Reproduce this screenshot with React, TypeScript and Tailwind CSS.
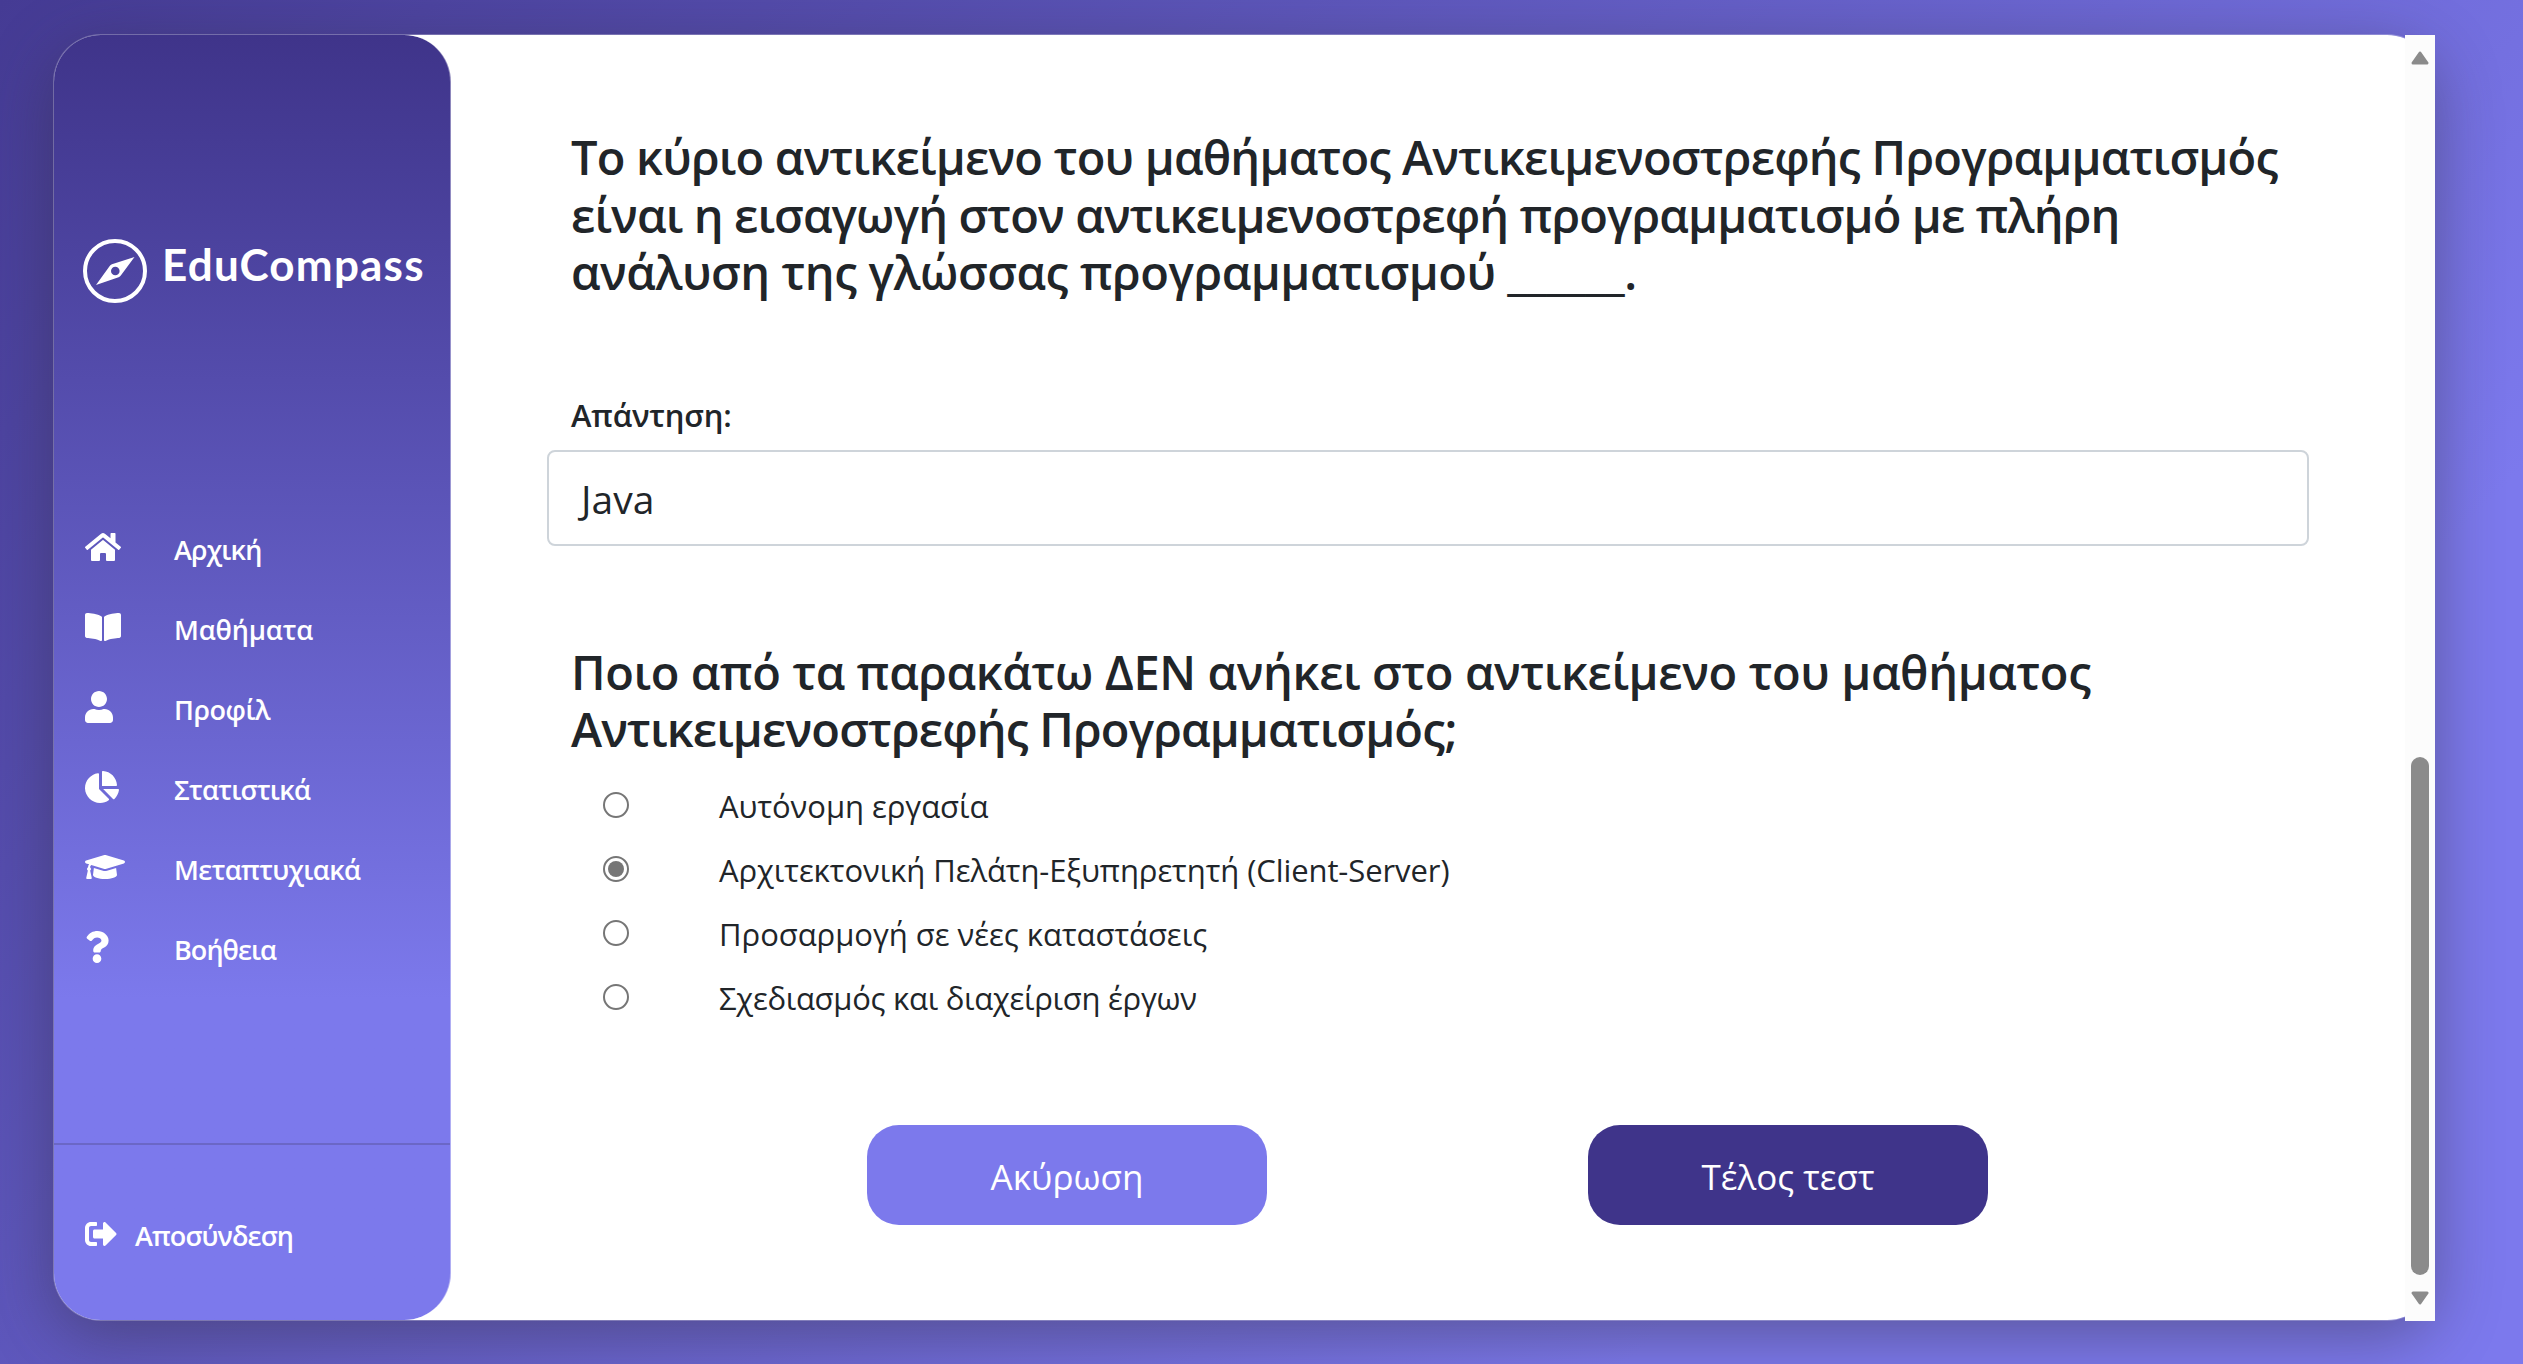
import type { ReactNode } from "react";
import {
  FaBookOpen,
  FaChartPie,
  FaGraduationCap,
  FaHome,
  FaQuestion,
  FaSignOutAlt,
  FaUser,
} from "react-icons/fa";

const menu: { label: string; icon: ReactNode; tracking: string }[] = [
  { label: "Αρχική", icon: <FaHome className="h-8 w-9" />, tracking: "tracking-[-0.8px]" },
  { label: "Μαθήματα", icon: <FaBookOpen className="h-8 w-9" />, tracking: "tracking-[-0.15px]" },
  { label: "Προφίλ", icon: <FaUser className="h-8 w-7" />, tracking: "tracking-[-0.45px]" },
  { label: "Στατιστικά", icon: <FaChartPie className="h-8 w-[34px]" />, tracking: "tracking-[-0.7px]" },
  { label: "Μεταπτυχιακά", icon: <FaGraduationCap className="h-8 w-10" />, tracking: "tracking-[-0.6px]" },
  { label: "Βοήθεια", icon: <FaQuestion className="h-8 w-6" />, tracking: "tracking-[-0.95px]" },
];

const options = [
  { label: "Αυτόνομη εργασία", tracking: "tracking-[-0.05px]" },
  {
    label: "Αρχιτεκτονική Πελάτη-Εξυπηρετητή (Client-Server)",
    tracking: "tracking-[-0.08px]",
    checked: true,
  },
  { label: "Προσαρμογή σε νέες καταστάσεις", tracking: "tracking-[-0.03px]" },
  { label: "Σχεδιασμός και διαχείριση έργων", tracking: "tracking-[-0.28px]" },
];

function Logo() {
  return (
    <div className="mt-[204px] ml-[29px] flex h-16 items-center">
      <svg width="64" height="64" viewBox="0 0 64 64" fill="none">
        <circle cx="32" cy="32" r="30" stroke="#fff" strokeWidth="4" />
        <path
          fillRule="evenodd"
          fill="#fff"
          d="M51.500 18 37.800 36.500q-.8 1.200-2.200 1.700L13 46l13.700-19q.8-1.200 2.200-1.700zM32.300 27.700a4.300 4.300 0 1 0 0 8.600 4.300 4.300 0 0 0 0-8.600z"
        />
      </svg>
      <span className="-mt-3.5 ml-[15px] font-[Lato] text-[44px] leading-none font-bold tracking-[1.2px] whitespace-nowrap">
        EduCompass
      </span>
    </div>
  );
}

function Sidebar() {
  return (
    <aside className="flex w-[397px] shrink-0 flex-col overflow-hidden rounded-[47px] border-r border-white/40 bg-linear-to-b from-[#3f348a] to-[#7c79ec] to-75% bg-origin-border text-white">
      <Logo />
      <nav className="mt-[204px] flex flex-col">
        {menu.map((m) => (
          <a key={m.label} className="flex h-20 items-center pl-[31px]">
            <span className="w-[89px]">{m.icon}</span>
            <span className={`pt-1 text-[27px] leading-none font-semibold ${m.tracking}`}>{m.label}</span>
          </a>
        ))}
      </nav>
      <div className="mt-auto h-[177px] border-t-2 border-[#6b67c6]">
        <a className="mt-[57px] flex h-16 items-center pl-[31px]">
          <span className="w-[50px]">
            <FaSignOutAlt className="size-8" />
          </span>
          <span className="pt-[3px] text-[27px] leading-none font-semibold tracking-[-0.9px]">Αποσύνδεση</span>
        </a>
      </div>
    </aside>
  );
}

function Radio({ checked }: { checked?: boolean }) {
  return (
    <span className="flex size-[26px] items-center justify-center rounded-full border-2 border-[#767676]">
      {checked && <span className="size-4 rounded-full bg-[#767676]" />}
    </span>
  );
}

function Scrollbar() {
  return (
    <div className="-mr-px -mb-px flex w-[30px] shrink-0 flex-col items-center bg-[#fcfcfc]">
      <svg className="mt-4" width="18" height="14" viewBox="0 0 18 14">
        <path d="M9 2 16 12H2z" fill="#8b8b8b" stroke="#8b8b8b" strokeWidth="3" strokeLinejoin="round" />
      </svg>
      <div className="mt-[692px] h-[518px] w-[18px] rounded-full bg-[#8b8b8b]" />
      <svg className="mt-4" width="18" height="14" viewBox="0 0 18 14">
        <path d="M9 12 16 2H2z" fill="#8b8b8b" stroke="#8b8b8b" strokeWidth="3" strokeLinejoin="round" />
      </svg>
    </div>
  );
}

function Question({ children }: { children: ReactNode }) {
  return (
    <h2 className="pl-6 text-[47px] leading-[57.6px] font-semibold whitespace-nowrap">{children}</h2>
  );
}

export default function App() {
  return (
    <div className="h-[1364px] w-[2523px] overflow-hidden bg-[linear-gradient(135deg,#453b94_0%,#7c79ed_77%)] px-[53px] pt-[34px] font-['Open_Sans',sans-serif]">
      <div className="flex h-[1287px] w-[2382px] rounded-[48px] border border-white/25 bg-white bg-clip-padding shadow-[0_16px_64px_rgba(50,45,60,0.45)]">
        <Sidebar />
        <main className="flex flex-1 flex-col pt-[94px] pr-24 pl-24 text-[#212529]">
          <Question>
            <span className="block tracking-[-0.79px]">
              Το κύριο αντικείμενο του μαθήματος Αντικειμενοστρεφής Προγραμματισμός
            </span>
            <span className="block tracking-[-0.87px]">
              είναι η εισαγωγή στον αντικειμενοστρεφή προγραμματισμό με πλήρη
            </span>
            <span className="block tracking-[-0.46px]">ανάλυση της γλώσσας προγραμματισμού ______.</span>
          </Question>
          <label className="mt-[89px] pl-6 text-[31px] leading-[48px] font-semibold tracking-[-0.2px]">
            Απάντηση:
          </label>
          <div className="mt-[11px] flex h-24 items-center rounded-lg border-2 border-[#ced4da] pt-0.5 pl-8 text-[39px]">
            Java
          </div>
          <div className="mt-[98px]">
            <Question>
              <span className="block tracking-[-0.38px]">
                Ποιο από τα παρακάτω ΔΕΝ ανήκει στο αντικείμενο του μαθήματος
              </span>
              <span className="block tracking-[-0.86px]">Αντικειμενοστρεφής Προγραμματισμός;</span>
            </Question>
          </div>
          <div className="mt-3.5 flex flex-col pl-14">
            {options.map((o) => (
              <div key={o.label} className="flex h-16 items-center">
                <Radio checked={o.checked} />
                <span className={`ml-[90px] pt-[3px] text-[31px] ${o.tracking}`}>{o.label}</span>
              </div>
            ))}
          </div>
          <div className="mt-24 flex justify-between pr-[321px] pl-80 text-[35px] text-white">
            <button className="h-[100px] w-[400px] rounded-[32px] bg-[#7c79ec] pt-[5px]">Ακύρωση</button>
            <button className="h-[100px] w-[400px] rounded-[32px] bg-[#3f348a] pt-[5px]">Τέλος τεστ</button>
          </div>
        </main>
        <Scrollbar />
      </div>
    </div>
  );
}
